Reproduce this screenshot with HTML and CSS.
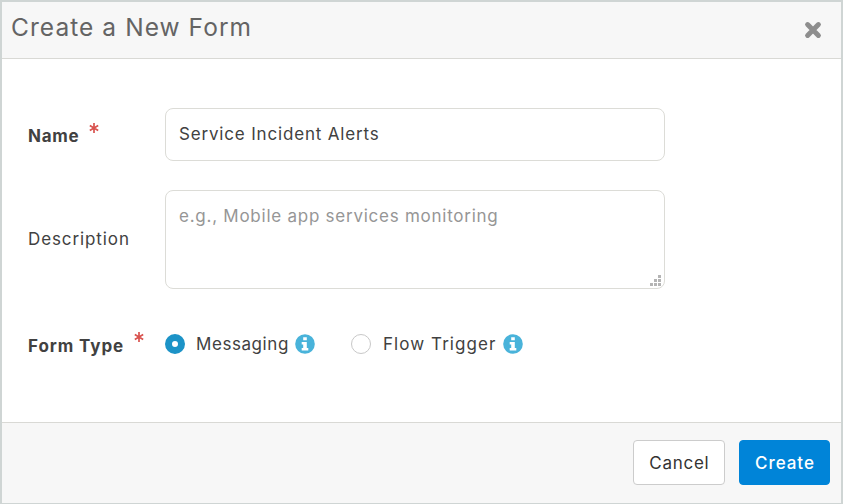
FILE: index.html
```html
<!DOCTYPE html>
<html lang="en">
<head>
<meta charset="utf-8">
<title>Create a New Form</title>
<link rel="stylesheet" href="styles.css">
</head>
<body>
<form class="dialog">
  <header class="dialog-header">
    <h1><span class="title-text">Create a New Form</span></h1>
    <svg class="close" viewBox="0 0 18 18" role="img" aria-label="Close"><path d="M3.6 3.6 14.4 14.4M14.4 3.6 3.6 14.4" stroke="#8e8e8e" stroke-width="5" stroke-linecap="round"/></svg>
  </header>
  <main class="dialog-body">
    <div class="row row-name">
      <div class="label required"><span class="name-text">Name</span><svg class="star" viewBox="0 0 10 12"><path d="M5 1v10M.8 3.5l8.4 5M9.2 3.5l-8.4 5"/></svg></div>
      <div class="field field-input"><span class="value-text">Service Incident Alerts</span></div>
    </div>
    <div class="row row-description">
      <div class="label"><span class="description-text">Description</span></div>
      <div class="field field-area"><span class="placeholder-text">e.g., Mobile app services monitoring</span>
        <svg class="grip" viewBox="0 0 11 11"><path d="M8 0h3v3H8zM4 4h3v3H4zM8 4h3v3H8zM0 8h3v3H0zM4 8h3v3H4zM8 8h3v3H8z"/></svg>
      </div>
    </div>
    <div class="row row-type">
      <div class="label required"><span class="type-text">Form Type</span><svg class="star" viewBox="0 0 10 12"><path d="M5 1v10M.8 3.5l8.4 5M9.2 3.5l-8.4 5"/></svg></div>
      <div class="options">
        <span class="radio checked"></span><span class="messaging-text">Messaging</span>
        <svg class="info" viewBox="0 0 20 20"><circle cx="10" cy="10" r="9.8"/><path d="M8.2 3.3h3.6v3H8.2zM6.7 8h5.1v6h1.5v2.4H6.7V14h1.5v-3.6H6.7z"/></svg>
        <span class="radio second"></span><span class="trigger-text">Flow Trigger</span>
        <svg class="info" viewBox="0 0 20 20"><circle cx="10" cy="10" r="9.8"/><path d="M8.2 3.3h3.6v3H8.2zM6.7 8h5.1v6h1.5v2.4H6.7V14h1.5v-3.6H6.7z"/></svg>
      </div>
    </div>
  </main>
  <footer class="dialog-footer">
    <button type="button" class="btn"><span class="cancel-text">Cancel</span></button>
    <button type="button" class="btn primary"><span class="create-text">Create</span></button>
  </footer>
</form>
</body>
</html>
```
FILE: styles.css
```css
* { box-sizing: border-box; }
body { margin: 0; background: #fff; font: 17px/24px Inter, "Liberation Sans", sans-serif; color: #414141; }
span { white-space: nowrap; }
.dialog { width: 843px; height: 504px; border: 2px solid #cfd5d4; border-bottom-width: 1px; display: flex; flex-direction: column; background: #fff; }
.dialog-header { height: 57px; flex: none; background: #f7f7f7; border-bottom: 1px solid #d9d9d5; display: flex; justify-content: space-between; padding: 10px 19px 0 9px; }
h1 { margin: 0; font-size: 24.5px; line-height: 31px; font-weight: 400; color: #646464; }
.title-text { letter-spacing: 1.06px; }
.close { width: 18px; height: 18px; margin-top: 9px; }
.dialog-body { flex: 1; padding: 49px 0 0 26px; }
.row { display: flex; }
.label { width: 137px; flex: none; display: flex; align-items: flex-start; }
.required { font-weight: 700; }
.name-text { letter-spacing: .75px; }
.type-text { letter-spacing: .92px; }
.description-text { letter-spacing: .9px; }
.value-text { letter-spacing: .83px; }
.placeholder-text { letter-spacing: .75px; }
.messaging-text { letter-spacing: .57px; }
.trigger-text { letter-spacing: 1.08px; }
.cancel-text { letter-spacing: .7px; margin-right: -.7px; }
.create-text { letter-spacing: .95px; margin-right: -.95px; }
.star { width: 10px; height: 12px; fill: none; stroke: #d9534f; stroke-width: 1.7; }
.field { width: 500px; border: 1px solid #dcdcd7; border-radius: 8px; padding: 13px; }
.row-name { height: 82px; }
.row-name .label { padding-top: 16px; }
.row-name .star { margin: -2px 0 0 10px; }
.field-input { height: 53px; }
.row-description { height: 141px; }
.row-description .label { padding-top: 37px; }
.field-area { height: 99px; color: #969696; position: relative; }
.grip { position: absolute; right: 3px; bottom: 2px; width: 11px; height: 11px; fill: #b4b4b4; }
.row-type .label { padding-top: 3px; }
.row-type .star { margin: -3px 0 0 10px; }
.options { display: flex; align-items: center; height: 26px; }
.radio { width: 20px; height: 20px; border: 1px solid #c8c8c8; border-radius: 50%; margin-right: 11px; }
.checked { border: 7px solid #1c93c7; }
.second { margin-left: 36px; margin-right: 12px; }
.info { width: 20px; height: 20px; margin-left: 6px; fill: #49b3da; }
.info path { fill: #fff; }
.dialog-footer { height: 81px; flex: none; background: #f7f7f7; border-top: 1px solid #d9d9d5; display: flex; justify-content: flex-end; gap: 14px; padding: 17px 11px 0 0; }
.btn { width: 92px; height: 45px; padding: 0; border: 1px solid #ccc; border-radius: 4px; background: #fff; color: #333; font: inherit; }
.primary { width: 91px; background: #0084d8; border-color: #0084d8; color: #fff; font-weight: 500; }
```
